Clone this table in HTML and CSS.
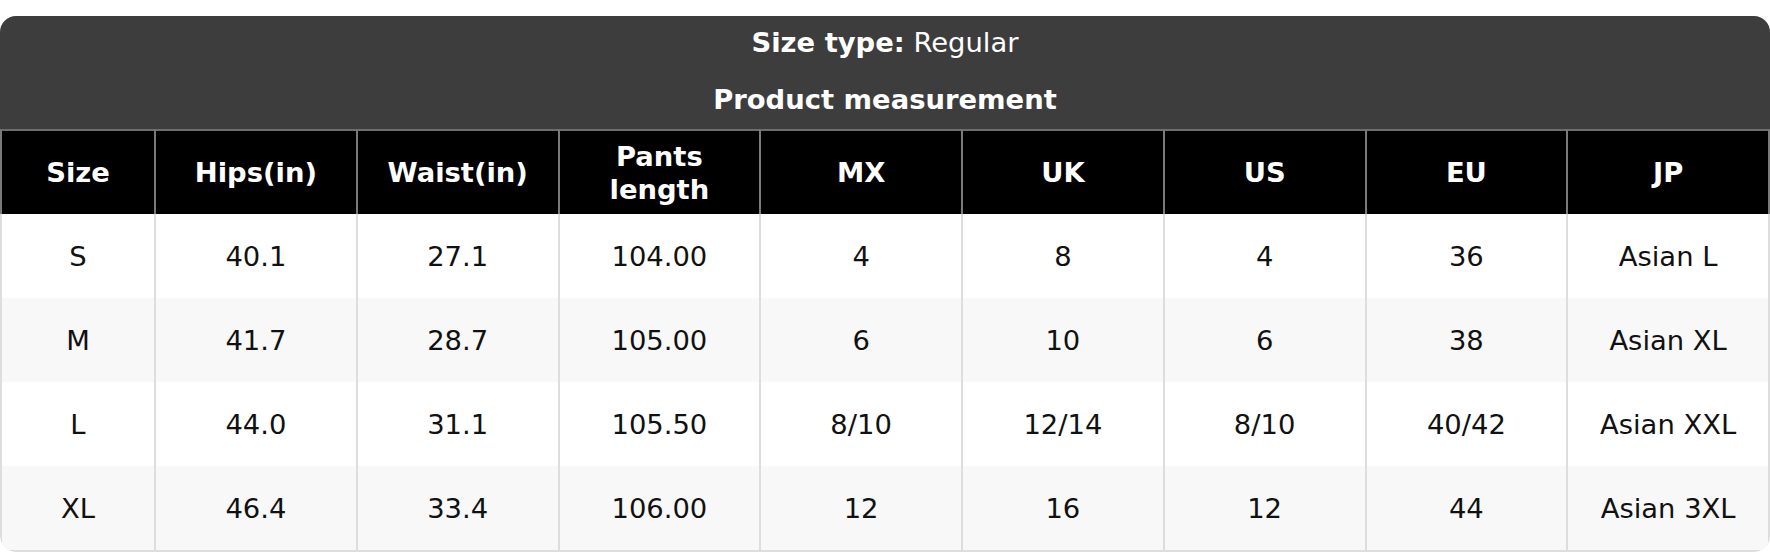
FILE: index.html
```html
<!DOCTYPE html>
<html lang="en">
<head>
<meta charset="utf-8">
<title>Size chart</title>
<link rel="stylesheet" href="styles.css">
</head>
<body>
<div class="card">
  <div class="caption">
    <div class="size-type"><strong>Size type:</strong> Regular</div>
    <div class="caption-title">Product measurement</div>
  </div>
  <div class="grid">
    <div class="cell head first">Size</div>
    <div class="cell head">Hips(in)</div>
    <div class="cell head">Waist(in)</div>
    <div class="cell head">Pants length</div>
    <div class="cell head">MX</div>
    <div class="cell head">UK</div>
    <div class="cell head">US</div>
    <div class="cell head">EU</div>
    <div class="cell head last">JP</div>

    <div class="cell first">S</div>
    <div class="cell">40.1</div>
    <div class="cell">27.1</div>
    <div class="cell">104.00</div>
    <div class="cell">4</div>
    <div class="cell">8</div>
    <div class="cell">4</div>
    <div class="cell">36</div>
    <div class="cell last">Asian L</div>

    <div class="cell alt first">M</div>
    <div class="cell alt">41.7</div>
    <div class="cell alt">28.7</div>
    <div class="cell alt">105.00</div>
    <div class="cell alt">6</div>
    <div class="cell alt">10</div>
    <div class="cell alt">6</div>
    <div class="cell alt">38</div>
    <div class="cell alt last">Asian XL</div>

    <div class="cell first">L</div>
    <div class="cell">44.0</div>
    <div class="cell">31.1</div>
    <div class="cell">105.50</div>
    <div class="cell">8/10</div>
    <div class="cell">12/14</div>
    <div class="cell">8/10</div>
    <div class="cell">40/42</div>
    <div class="cell last">Asian XXL</div>

    <div class="cell alt first">XL</div>
    <div class="cell alt">46.4</div>
    <div class="cell alt">33.4</div>
    <div class="cell alt">106.00</div>
    <div class="cell alt">12</div>
    <div class="cell alt">16</div>
    <div class="cell alt">12</div>
    <div class="cell alt">44</div>
    <div class="cell alt last">Asian 3XL</div>
  </div>
</div>
</body>
</html>
```

FILE: styles.css
```css
* { box-sizing: border-box; }

html, body {
  margin: 0;
  padding: 0;
  background: #ffffff;
}

body {
  padding-top: 16px;
  font-family: "DejaVu Sans", Verdana, sans-serif;
  font-size: 27.4px;
  line-height: 33px;
  color: #111111;
}

.card {
  width: 1770px;
  border-radius: 16px;
  overflow: hidden;
  background: #ffffff;
}

.caption {
  background: #3d3d3d;
  color: #ffffff;
  text-align: center;
}

.size-type {
  padding: 10px 0 12px;
}

.size-type strong {
  font-weight: bold;
}

.caption-title {
  font-weight: bold;
  padding: 12px 0 13px;
}

.grid {
  display: grid;
  grid-template-columns: 152px repeat(8, 1fr);
  border: 2px solid #dddddd;
  border-top: none;
  border-radius: 0 0 16px 16px;
}

.cell {
  display: flex;
  align-items: center;
  justify-content: center;
  text-align: center;
  height: 84px;
  padding: 0 12px;
  border-left: 2px solid #dddddd;
  background: #ffffff;
}

.cell.first {
  border-left: none;
}

.cell.alt {
  background: #f8f8f8;
}

.cell.head {
  background: #000000;
  color: #ffffff;
  font-weight: bold;
  height: 85px;
  border-top: 2px solid #6e6e6e;
  border-left-color: #7a7a7a;
}

.cell.head.first {
  margin-left: -2px;
  border-left: 2px solid #7a7a7a;
}

.cell.head.last {
  margin-right: -2px;
  border-right: 2px solid #7a7a7a;
}
```
